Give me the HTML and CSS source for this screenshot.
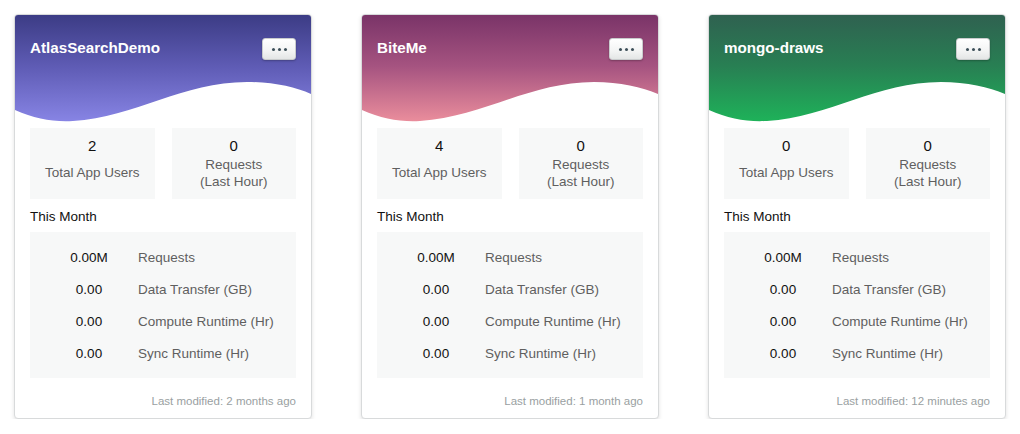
FILE: index.html
```html
<!DOCTYPE html>
<html>
<head>
<meta charset="utf-8">
<link rel="stylesheet" href="styles.css">
</head>
<body>
<div class="cards">
  <div class="card">
    <div class="card-header indigo">
      <div class="title">AtlasSearchDemo</div>
      <button class="more"><span></span><span></span><span></span></button>
      <svg class="wave" viewBox="0 0 296 113" preserveAspectRatio="none"><path d="M0,95 C20,104 38,107 58,106 C120,102 168,67 232,67 C258,67 280,72 296,79 L296,113 L0,113 Z" fill="#fff"/></svg>
    </div>
    <div class="card-body">
      <div class="stats">
        <div class="stat"><div class="num">2</div><div class="lbl">Total App Users</div></div>
        <div class="stat"><div class="num">0</div><div class="lbl">Requests<br>(Last Hour)</div></div>
      </div>
      <div class="section">This Month</div>
      <div class="month">
        <div class="val">0.00M</div><div class="name">Requests</div>
        <div class="val">0.00</div><div class="name">Data Transfer (GB)</div>
        <div class="val">0.00</div><div class="name">Compute Runtime (Hr)</div>
        <div class="val">0.00</div><div class="name">Sync Runtime (Hr)</div>
      </div>
      <div class="footer">Last modified: 2 months ago</div>
    </div>
  </div>
  <div class="card">
    <div class="card-header plum">
      <div class="title">BiteMe</div>
      <button class="more"><span></span><span></span><span></span></button>
      <svg class="wave" viewBox="0 0 296 113" preserveAspectRatio="none"><path d="M0,95 C20,104 38,107 58,106 C120,102 168,67 232,67 C258,67 280,72 296,79 L296,113 L0,113 Z" fill="#fff"/></svg>
    </div>
    <div class="card-body">
      <div class="stats">
        <div class="stat"><div class="num">4</div><div class="lbl">Total App Users</div></div>
        <div class="stat"><div class="num">0</div><div class="lbl">Requests<br>(Last Hour)</div></div>
      </div>
      <div class="section">This Month</div>
      <div class="month">
        <div class="val">0.00M</div><div class="name">Requests</div>
        <div class="val">0.00</div><div class="name">Data Transfer (GB)</div>
        <div class="val">0.00</div><div class="name">Compute Runtime (Hr)</div>
        <div class="val">0.00</div><div class="name">Sync Runtime (Hr)</div>
      </div>
      <div class="footer">Last modified: 1 month ago</div>
    </div>
  </div>
  <div class="card">
    <div class="card-header green">
      <div class="title">mongo-draws</div>
      <button class="more"><span></span><span></span><span></span></button>
      <svg class="wave" viewBox="0 0 296 113" preserveAspectRatio="none"><path d="M0,95 C20,104 38,107 58,106 C120,102 168,67 232,67 C258,67 280,72 296,79 L296,113 L0,113 Z" fill="#fff"/></svg>
    </div>
    <div class="card-body">
      <div class="stats">
        <div class="stat"><div class="num">0</div><div class="lbl">Total App Users</div></div>
        <div class="stat"><div class="num">0</div><div class="lbl">Requests<br>(Last Hour)</div></div>
      </div>
      <div class="section">This Month</div>
      <div class="month">
        <div class="val">0.00M</div><div class="name">Requests</div>
        <div class="val">0.00</div><div class="name">Data Transfer (GB)</div>
        <div class="val">0.00</div><div class="name">Compute Runtime (Hr)</div>
        <div class="val">0.00</div><div class="name">Sync Runtime (Hr)</div>
      </div>
      <div class="footer">Last modified: 12 minutes ago</div>
    </div>
  </div>
</div>
</body>
</html>
```

FILE: styles.css
```css
* { box-sizing: border-box; }
html, body { margin: 0; padding: 0; background: #fff; }
body { font-family: "Liberation Sans", Arial, sans-serif; color: #111; }

.cards {
  display: flex;
  gap: 49px;
  padding: 14px 0 0 14px;
}

.card {
  width: 298px;
  height: 405px;
  border: 1px solid #d8dadb;
  border-radius: 4px;
  background: #fff;
  box-shadow: 0 2px 4px rgba(0, 0, 0, 0.12);
  overflow: hidden;
  display: flex;
  flex-direction: column;
}

.card-header {
  position: relative;
  height: 113px;
  padding: 23px 15px 0 15px;
  display: flex;
  justify-content: space-between;
  align-items: flex-start;
}
.indigo { background: linear-gradient(180deg, #3c3c85 0%, #5e5bb4 45%, #8c89ea 100%); }
.plum { background: linear-gradient(180deg, #7a3468 0%, #a55380 45%, #f2949f 100%); }
.green { background: linear-gradient(180deg, #2f6150 0%, #287f53 45%, #1db85a 100%); }

.title {
  color: #fff;
  font-weight: bold;
  font-size: 15.2px;
  line-height: 20px;
  position: relative;
  z-index: 1;
}

.more {
  position: relative;
  z-index: 1;
  width: 34px;
  height: 22px;
  padding: 0;
  border: 1px solid #c9cccd;
  border-radius: 3px;
  background: linear-gradient(180deg, #ffffff 0%, #f3f4f4 60%, #e4e6e6 100%);
  box-shadow: 0 1px 2px rgba(0, 0, 0, 0.25);
  display: flex;
  align-items: center;
  justify-content: center;
  gap: 3px;
}
.more span {
  width: 3px;
  height: 3px;
  border-radius: 50%;
  background: #3d4f58;
}

.wave {
  position: absolute;
  left: 0;
  bottom: 0;
  width: 100%;
  height: 100%;
  display: block;
}

.card-body {
  flex: 1;
  padding: 0 15px 0 15px;
  display: flex;
  flex-direction: column;
}

.stats {
  display: grid;
  grid-template-columns: 1fr 1fr;
  gap: 17px;
}
.stat {
  background: #f7f8f8;
  height: 71px;
  padding: 9px 0 9px;
  text-align: center;
  display: flex;
  flex-direction: column;
}
.num {
  font-size: 15px;
  line-height: 18px;
  color: #111;
  font-weight: 500;
}
.lbl {
  flex: 1;
  display: flex;
  align-items: center;
  justify-content: center;
  font-size: 13.5px;
  line-height: 17px;
  color: #5f5f5f;
}

.section {
  font-size: 13.5px;
  line-height: 16px;
  color: #111;
  margin-top: 10px;
  height: 23px;
}

.month {
  background: #f7f8f8;
  padding: 9px 0 9px 14px;
  display: grid;
  grid-template-columns: 90px 1fr;
  column-gap: 4px;
  grid-auto-rows: 32px;
  align-items: center;
  font-size: 13.5px;
}
.val { text-align: center; color: #111; }
.name { color: #5f5f5f; }

.footer {
  text-align: right;
  font-size: 11.5px;
  color: #9a9fa2;
  margin-top: 17px;
}
```
